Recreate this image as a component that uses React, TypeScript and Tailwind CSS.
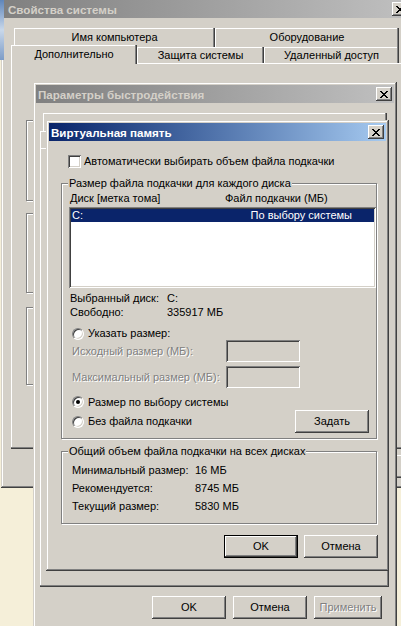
import React from 'react'

// classic win2k/xp-classic bevels
const frame = 'shadow-[inset_-1px_-1px_#404040,inset_1px_1px_#d4d0c8,inset_-2px_-2px_#808080,inset_2px_2px_#fff]'
const raised = 'shadow-[inset_-1px_-1px_#404040,inset_1px_1px_#fff,inset_-2px_-2px_#808080,inset_2px_2px_#d4d0c8]'
const sunken = 'shadow-[inset_1px_1px_#808080,inset_-1px_-1px_#fff,inset_2px_2px_#404040,inset_-2px_-2px_#d4d0c8]'
const tabEdge = 'shadow-[inset_-1px_0_#404040,inset_-2px_0_#808080,inset_1px_1px_#fff]'
const panelEdge = 'shadow-[inset_-1px_-1px_#404040,inset_-2px_-2px_#808080,inset_1px_1px_#fff]'
const disabledText = 'text-[#808080] [text-shadow:1px_1px_0_#fff]'

function CloseGlyph() {
  return (
    <svg width="8" height="7" viewBox="0 0 8 7" shapeRendering="crispEdges">
      <path
        d="M0 0h2v1H0zM6 0h2v1H6zM1 1h2v1H1zM5 1h2v1H5zM2 2h4v1H2zM3 3h2v1H3zM2 4h4v1H2zM1 5h2v1H1zM5 5h2v1H5zM0 6h2v1H0zM6 6h2v1H6z"
        fill="#000"
      />
    </svg>
  )
}

function TitleBar({ title, active, wide }: { title: string; active?: boolean; wide?: boolean }) {
  return (
    <div
      className={`h-[18px] shrink-0 flex items-center justify-between pr-[2px] ${wide ? 'pl-[4px]' : 'pl-[2px]'} ${
        active
          ? 'bg-linear-to-r from-[#0a246a] to-[#a6caf0] text-white'
          : 'bg-linear-to-r from-[#808080] to-[#c0c0c0] text-[#d4d0c8]'
      }`}
    >
      <span className="font-bold text-[11.6px]">{title}</span>
      <div className={`w-[16px] h-[14px] bg-[#d4d0c8] flex items-center justify-center ${raised}`}>
        <CloseGlyph />
      </div>
    </div>
  )
}

function Btn({
  children,
  className = '',
  isDefault,
  disabled
}: {
  children?: React.ReactNode
  className?: string
  isDefault?: boolean
  disabled?: boolean
}) {
  const face = (
    <div className={`w-full h-full flex items-center justify-center bg-[#d4d0c8] ${raised} ${disabled ? disabledText : ''}`}>
      {children}
    </div>
  )
  if (isDefault) {
    return <div className={`shrink-0 border border-black ${className}`}>{face}</div>
  }
  return <div className={`shrink-0 ${className}`}>{face}</div>
}

function Checkbox() {
  return <span className={`inline-block shrink-0 w-[13px] h-[13px] bg-white ${sunken}`} />
}

function Radio({ checked }: { checked?: boolean }) {
  return (
    <span className="relative inline-block shrink-0 w-[12px] h-[12px] rounded-full bg-white border border-t-[#808080] border-l-[#808080] border-b-white border-r-white shadow-[inset_1px_1px_#404040,inset_-1px_-1px_#d4d0c8]">
      {checked && <span className="absolute left-[3px] top-[3px] w-[4px] h-[4px] rounded-full bg-black" />}
    </span>
  )
}

function GroupBox({ title, className = '', children }: { title?: string; className?: string; children?: React.ReactNode }) {
  return (
    <div className={`relative shrink-0 border border-[#808080] shadow-[inset_1px_1px_#fff,1px_1px_#fff] ${className}`}>
      {title && (
        <span className="absolute left-[6px] top-[-7px] bg-[#d4d0c8] px-[1px] leading-[13px] whitespace-nowrap">{title}</span>
      )}
      {children}
    </div>
  )
}

// back window: mostly covered, only its edges show
function SystemProperties() {
  return (
    <div className={`absolute left-[1px] top-[-3px] w-[412px] h-[491px] bg-[#d4d0c8] p-[3px] flex flex-col ${frame}`}>
      <TitleBar wide title="Свойства системы" />

      {/* back row of tabs */}
      <div className="mt-[10px] ml-[10px] flex h-[17px] shrink-0">
        <div className={`w-[201px] h-[19px] bg-[#d4d0c8] flex justify-center pt-[3px] ${tabEdge}`}>Имя компьютера</div>
        <div className={`w-[184px] h-[19px] bg-[#d4d0c8] flex justify-center pt-[3px] ${tabEdge}`}>Оборудование</div>
      </div>
      {/* front row */}
      <div className="ml-[7px] flex items-end h-[18px] shrink-0">
        <div className={`relative z-10 w-[126px] h-[19px] mb-[-1px] bg-[#d4d0c8] flex justify-center pt-[3px] ${tabEdge}`}>Дополнительно</div>
        <div className={`w-[127px] h-[16px] bg-[#d4d0c8] flex justify-center pt-[2px] ${tabEdge}`}>Защита системы</div>
        <div className={`w-[135px] h-[16px] bg-[#d4d0c8] flex justify-center pt-[2px] ${tabEdge}`}>Удаленный доступ</div>
      </div>

      <div className={`ml-[7px] w-[395px] h-[386px] shrink-0 bg-[#d4d0c8] pt-[57px] pl-[15px] flex flex-col ${panelEdge}`}>
        <GroupBox className="w-[365px] h-[81px]" />
        <GroupBox className="mt-[12px] w-[365px] h-[80px]" />
        <GroupBox className="mt-[14px] w-[365px] h-[78px]" />
      </div>

      <div className="mt-[6px] flex justify-end gap-[6px] pr-[5px]">
        <Btn className="w-[75px] h-[23px]" />
        <Btn className="w-[75px] h-[23px]" />
        <Btn className="w-[75px] h-[23px]" />
      </div>
    </div>
  )
}

function PerformanceOptions() {
  return (
    <div className={`absolute left-[33px] top-[82px] w-[364px] h-[560px] bg-[#d4d0c8] p-[3px] flex flex-col ${frame}`}>
      <TitleBar title="Параметры быстродействия" />
      <div className={`mt-[10px] ml-[7px] w-[344px] h-[18px] shrink-0 bg-[#d4d0c8] ${tabEdge}`} />
      <div className={`ml-[4px] w-[349px] h-[17px] shrink-0 bg-[#d4d0c8] ${tabEdge}`} />
      <div className={`ml-[4px] w-[349px] h-[439px] shrink-0 bg-[#d4d0c8] ${panelEdge}`} />
      <div className="mt-[9px] ml-[116px] flex gap-[7px]">
        <Btn className="w-[74px] h-[23px]">OK</Btn>
        <Btn className="w-[74px] h-[23px]">Отмена</Btn>
        <Btn className="w-[68px] h-[23px]" disabled>Применить</Btn>
      </div>
    </div>
  )
}

function VirtualMemory() {
  return (
    <div className={`absolute left-[46px] top-[120px] w-[343px] h-[451px] bg-[#d4d0c8] p-[3px] flex flex-col ${frame}`}>
      <TitleBar active title="Виртуальная память" />

      <div className="mt-[14px] ml-[19px] flex items-center gap-[3px] h-[13px]">
        <Checkbox />
        <span>Автоматически выбирать объем файла подкачки</span>
      </div>

      <GroupBox title="Размер файла подкачки для каждого диска" className="mt-[15px] ml-[12px] w-[316px] h-[256px] flex flex-col">
        <div className="mt-[8px] pl-[8px] flex h-[13px]">
          <span className="w-[155px]">Диск [метка тома]</span>
          <span>Файл подкачки (МБ)</span>
        </div>
        <div className={`mt-[2px] ml-[7px] h-[81px] bg-white p-[2px] ${sunken}`}>
          <div className="h-[13px] bg-[#0a246a] text-white flex justify-between pl-[1px] pr-[22px]">
            <span>C:</span>
            <span>По выбору системы</span>
          </div>
        </div>
        <div className="mt-[4px] pl-[8px] flex">
          <span className="w-[97px]">Выбранный диск:</span>
          <span>C:</span>
        </div>
        <div className="mt-[1px] pl-[8px] flex">
          <span className="w-[97px]">Свободно:</span>
          <span>335917 МБ</span>
        </div>
        <div className="mt-[8px] pl-[10px] flex items-center gap-[4px] h-[13px]">
          <Radio />
          <span>Указать размер:</span>
        </div>
        <div className="pl-[10px] flex items-center h-[22px]">
          <span className={`w-[154px] ${disabledText}`}>Исходный размер (МБ):</span>
          <div className={`w-[74px] h-[22px] bg-[#d4d0c8] ${sunken}`} />
        </div>
        <div className="mt-[4px] pl-[10px] flex items-center h-[22px]">
          <span className={`w-[154px] ${disabledText}`}>Максимальный размер (МБ):</span>
          <div className={`w-[74px] h-[22px] bg-[#d4d0c8] ${sunken}`} />
        </div>
        <div className="mt-[8px] pl-[10px] flex items-center gap-[4px] h-[12px]">
          <Radio checked />
          <span>Размер по выбору системы</span>
        </div>
        <div className="mt-[2px] pl-[10px] pr-[7px] flex items-center h-[23px]">
          <Radio />
          <span className="ml-[4px]">Без файла подкачки</span>
          <Btn className="ml-auto w-[74px] h-[23px]">Задать</Btn>
        </div>
      </GroupBox>

      <GroupBox title="Общий объем файла подкачки на всех дисках" className="mt-[12px] ml-[12px] w-[316px] h-[73px]">
        <div className="mt-[9px] pl-[10px] flex flex-col leading-[18px]">
          <div className="flex">
            <span className="w-[123px]">Минимальный размер:</span>
            <span>16 МБ</span>
          </div>
          <div className="flex">
            <span className="w-[123px]">Рекомендуется:</span>
            <span>8745 МБ</span>
          </div>
          <div className="flex">
            <span className="w-[123px]">Текущий размер:</span>
            <span>5830 МБ</span>
          </div>
        </div>
      </GroupBox>

      <div className="mt-[11px] pr-[8px] flex justify-end gap-[6px]">
        <Btn isDefault className="w-[74px] h-[23px]">OK</Btn>
        <Btn className="w-[74px] h-[23px]">Отмена</Btn>
      </div>
    </div>
  )
}

export default function App() {
  return (
    <div className="relative w-[401px] h-[626px] overflow-hidden bg-[#f5efd9] font-['Liberation_Sans',Arial,sans-serif] text-[11px] leading-[13px] text-black">
      <SystemProperties />
      <PerformanceOptions />
      <VirtualMemory />
      {/* bit of desktop wallpaper peeking at the top-left */}
      <div className="absolute left-0 top-0 w-[4px] h-[60px] bg-linear-to-b from-[#5f86bb] via-[#c9d8ea] to-[#7d9cc7]" />
    </div>
  )
}
